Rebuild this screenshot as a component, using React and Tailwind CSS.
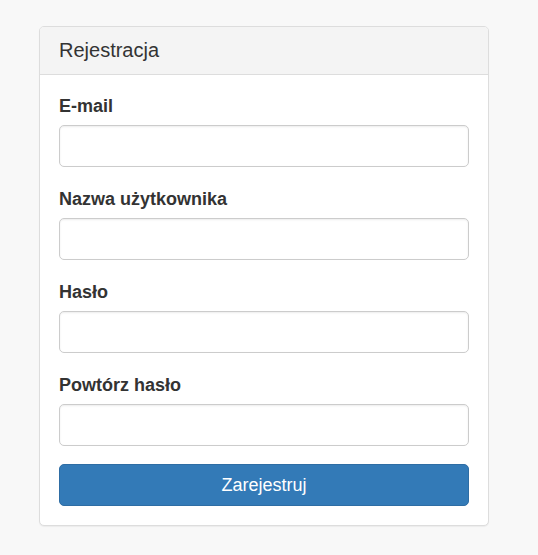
const fields = [
  { id: "email", label: "E-mail", type: "email" },
  { id: "username", label: "Nazwa użytkownika", type: "text" },
  { id: "password", label: "Hasło", type: "password" },
  { id: "password-repeat", label: "Powtórz hasło", type: "password" },
];

function Field({ id, label, type }) {
  return (
    <div className="flex flex-col">
      <label htmlFor={id} className="mb-[6px] text-[18px] leading-[25px] font-bold">
        {label}
      </label>
      <input
        id={id}
        name={id}
        type={type}
        className="h-[42px] w-full rounded-[5px] border border-[#cccccc] bg-white px-[15px] text-[18px] text-[#555555] shadow-[inset_0_1px_2px_rgba(0,0,0,0.075)] outline-none focus:border-[#66afe9]"
      />
    </div>
  );
}

export default function App() {
  return (
    <main className="min-h-screen bg-[#f8f8f8] pt-[26px] pr-[49px] pb-7 pl-[39px] font-['Liberation_Sans',Arial,sans-serif] text-[#333333]">
      <section className="rounded-[5px] border border-[#dddddd] bg-white shadow-[0_1px_1px_rgba(0,0,0,0.05)]">
        <header className="rounded-t-[4px] border-b border-[#dddddd] bg-[#f4f4f4] px-[19px] py-[11px]">
          <h1 className="text-[20px] leading-[25px]">Rejestracja</h1>
        </header>
        <form className="flex flex-col gap-[18px] p-[19px]" onSubmit={(e) => e.preventDefault()}>
          <div className="flex flex-col gap-5">
            {fields.map((field) => (
              <Field key={field.id} {...field} />
            ))}
          </div>
          <button
            type="submit"
            className="h-[42px] w-full cursor-pointer rounded-[5px] border border-[#2e6da4] bg-[#337ab7] text-[18px] leading-[25px] text-white hover:bg-[#286090]"
          >
            Zarejestruj
          </button>
        </form>
      </section>
    </main>
  );
}
